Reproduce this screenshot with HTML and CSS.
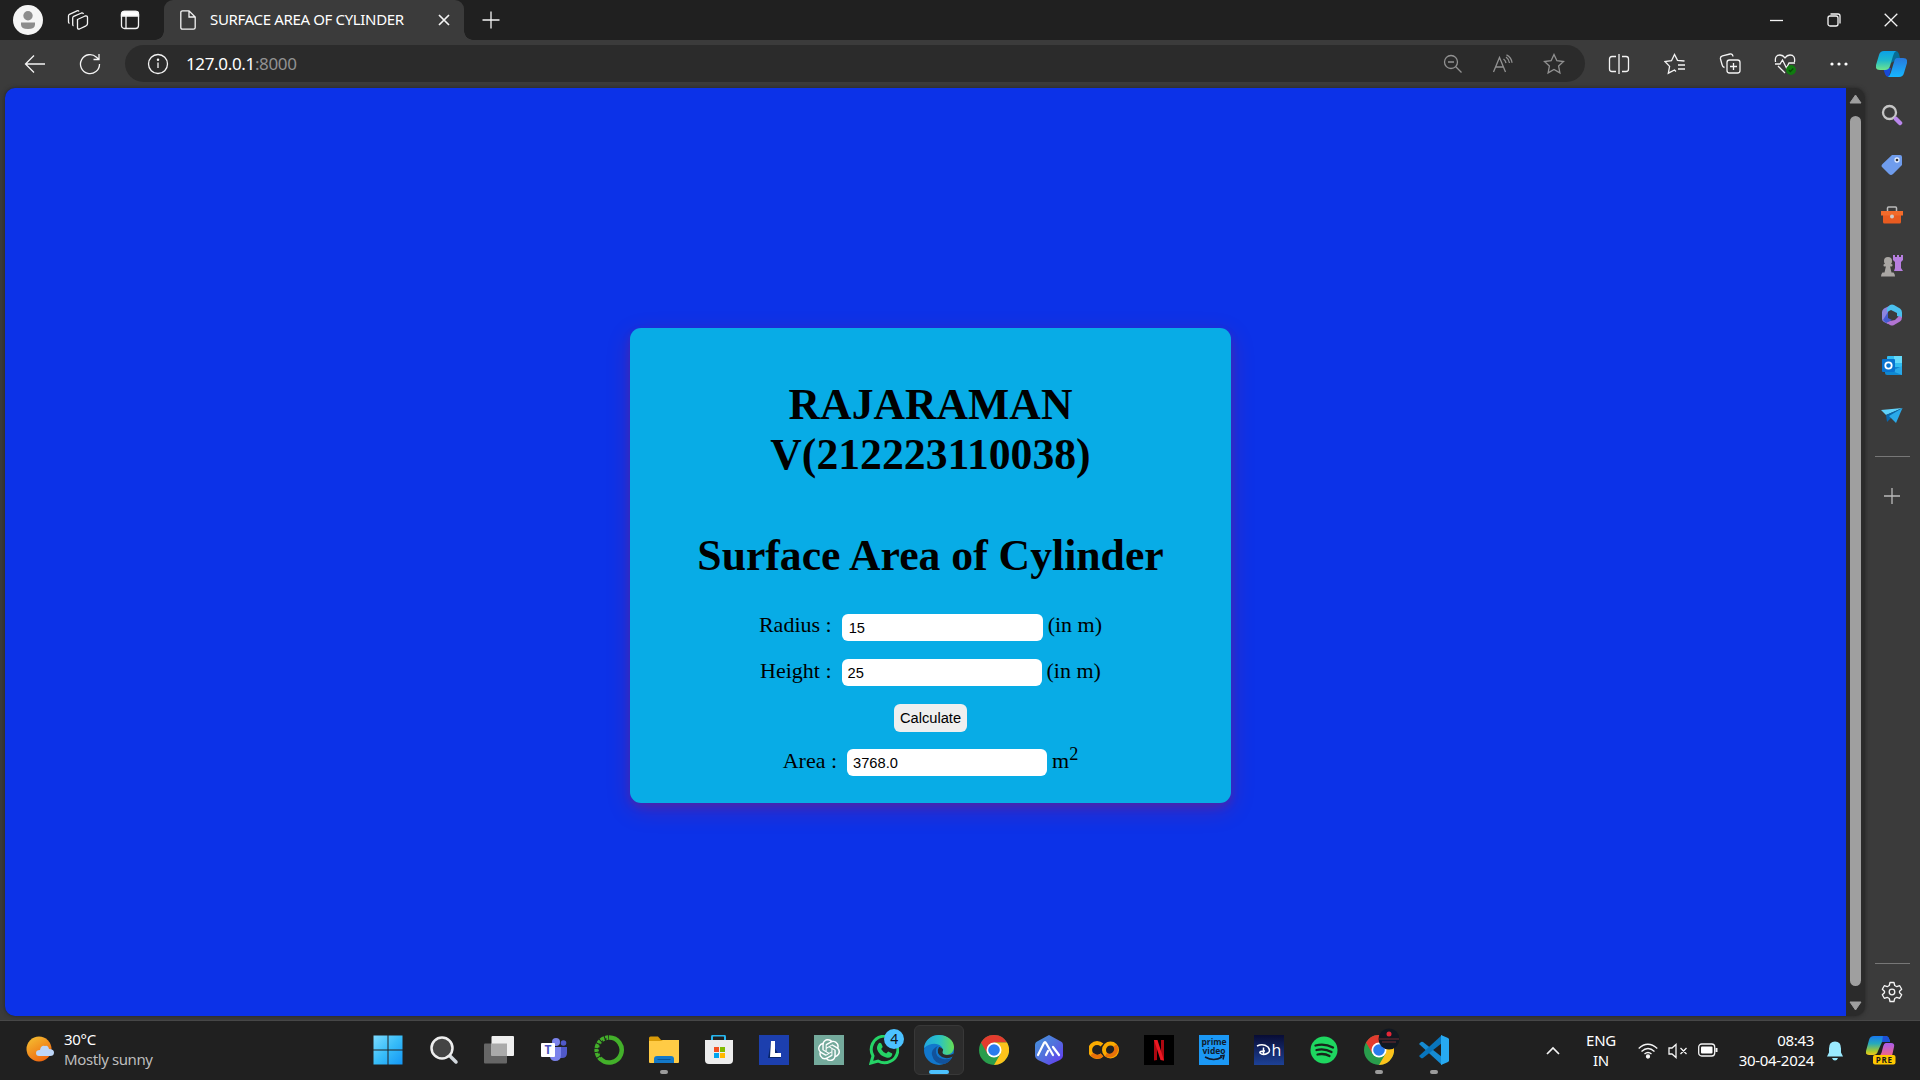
FILE: index.html
```html
<!DOCTYPE html>
<html lang="en">
<head>
<meta charset="utf-8">
<title>SURFACE AREA OF CYLINDER</title>
<link rel="stylesheet" href="styles.css">
</head>
<body>
<div class="desktop">
<header class="titlebar">
  <div class="cell"><svg width="30" height="30" viewBox="0 0 30 30"><circle cx="15" cy="15" r="15" fill="#f5f5f5"/><circle cx="15" cy="10.800" r="4.700" fill="#8c8c8c"/><path d="M8 17.500h14v2q0 4.500-7 4.500t-7-4.500z" fill="#8c8c8c"/></svg></div>
  <div class="cell"><svg class="line" width="22" height="22" viewBox="0 0 22 22"><path d="M10.500 10.500l7.500-3.500q2.500-.5 2.500 1.500v6q0 1.500-1.500 2.300l-6.500 3.200q-2 .5-2-1.500z"/><path d="M6.500 17q-.8-.3-.8-1.500V9q0-1 1-1.700L14.500 4q1.500-.4 2 1"/><path d="M2.500 14.500q-1-.4-1-1.500V7q0-1 1-1.700L10 1.800q1.500-.4 2 .8"/></svg></div>
  <div class="cell"><svg class="line" width="20" height="20" viewBox="0 0 20 20"><rect x="1.500" y="1.500" width="17" height="17" rx="3"/><path d="M1.500 6V4q0-2.500 2.500-2.500h12q2.500 0 2.500 2.500v2z" fill="#fff"/><path d="M6 6v12.500"/></svg></div>
  <div class="tab">
    <svg class="line" width="16" height="20" viewBox="0 0 16 20"><path d="M2.500.8H9l6.200 6.200v10.500q0 1.700-1.700 1.700h-11Q.8 19.200.8 17.500v-15Q.8.8 2.500.8zM9 .8V7h6"/></svg>
    <span class="tab-title">SURFACE AREA OF CYLINDER</span>
    <svg class="line strong" width="12" height="12" viewBox="0 0 12 12"><path d="M1 1l10 10M11 1L1 11"/></svg>
  </div>
  <div class="cell"><svg class="line" width="18" height="18" viewBox="0 0 18 18"><path d="M9 .5v17M.5 9h17"/></svg></div>
  <div></div>
  <div class="cell"><svg class="line" width="13" height="13" viewBox="0 0 13 13"><path d="M0 6.500h13"/></svg></div>
  <div class="cell"><svg class="line" width="14" height="14" viewBox="0 0 14 14"><rect x="1" y="3" width="10" height="10" rx="2"/><path d="M3.500 1H11q2 0 2 2v7.500"/></svg></div>
  <div class="cell"><svg class="line" width="14" height="14" viewBox="0 0 14 14"><path d="M.7.7l12.600 12.600M13.300.7L.7 13.300"/></svg></div>
</header>
<nav class="toolbar">
  <div class="cell"><svg class="line" width="22" height="20" viewBox="0 0 22 20"><path d="M21 10H1.500M10 1.500L1.500 10l8.500 8.500"/></svg></div>
  <div class="cell"><svg class="line" width="22" height="22" viewBox="0 0 22 22"><path d="M20.500 11A9.500 9.500 0 1 1 17.500 4.200L20 6.500M20 1v5.500h-5.500"/></svg></div>
  <div class="address">
    <svg class="line" width="22" height="22" viewBox="0 0 22 22"><circle cx="11" cy="11" r="9.500"/><path d="M11 9.500V15"/><circle cx="11" cy="6.800" r=".6"/></svg>
    <span class="url">127.0.0.1<span class="port">:8000</span></span>
    <div class="address-tools">
      <svg class="line dim" width="20" height="20" viewBox="0 0 20 20"><circle cx="8" cy="8" r="6.500"/><path d="M5 8h6M12.800 12.800l5.700 5.700"/></svg>
      <svg class="line dim" width="22" height="20" viewBox="0 0 22 20"><path d="M1.500 18L7.500 3.500 13.500 18M3.700 13h7.600M11.500 5q2 1.500 2.500 4M14 3q2.800 2 3.500 6M14.500.8q5 2.500 5.500 8"/></svg>
      <svg class="line dim" width="22" height="22" viewBox="0 0 22 22"><path d="M11 1.500l2.900 6.200 6.600.8-4.900 4.600 1.300 6.800-5.900-3.400-5.900 3.400 1.300-6.800-4.900-4.600 6.600-.8z"/></svg>
    </div>
  </div>
  <div></div>
  <div class="cell"><svg class="line" width="22" height="22" viewBox="0 0 22 22"><path d="M11 1v20M8 3.500H4Q1.500 3.500 1.500 6v10q0 2.500 2.500 2.500h4M14 3.500h4q2.500 0 2.500 2.500v10q0 2.500-2.500 2.500h-4"/></svg></div>
  <div class="cell"><svg class="line" width="22" height="22" viewBox="0 0 22 22"><path d="M12 18.500l-1.500-1.500-6.200 3.200 1.300-6.800L1 8.500l6.500-.8L10.500 1.500l3 5.800 7 .7M14 12h7M14 16h7"/></svg></div>
  <div class="cell"><svg class="line" width="22" height="22" viewBox="0 0 22 22"><rect x="8" y="7" width="13" height="13" rx="2.500"/><path d="M14.500 10v7M11 13.500h7M5.500 14.500q-2-.5-2.500-3L1.500 6Q1 3.500 3.500 2.800L11 1q2.500-.4 3 2.500"/></svg></div>
  <div class="cell"><svg class="line" width="22" height="22" viewBox="0 0 22 22"><path d="M1.500 9Q.5 2 6 2q3 0 5 2.800Q13 2 16 2q5.500 0 4.500 7M1 11h5l2.500-4 4 8 2.500-5h6M4 13l7 7"/><circle cx="17" cy="17" r="4.300" fill="#107c10" stroke="#107c10"/><path d="M14.800 17l1.500 1.500 3-3" stroke="#064b06"/></svg></div>
  <div class="cell"><svg width="18" height="4" viewBox="0 0 18 4" fill="#fff"><circle cx="2" cy="2" r="1.600"/><circle cx="9" cy="2" r="1.600"/><circle cx="16" cy="2" r="1.600"/></svg></div>
  <div class="cell"><svg width="31" height="28" viewBox="0 0 31 28"><defs><linearGradient id="cp1" x2="0" y2="1"><stop stop-color="#0aa0e8"/><stop offset=".5" stop-color="#20b9cb"/><stop offset="1" stop-color="#6fe58c"/></linearGradient><linearGradient id="cp2" x2="0" y2="1"><stop stop-color="#2878dc"/><stop offset="1" stop-color="#16b7ff"/></linearGradient></defs><path d="M15 1h5q2 0 3 3l1 4-9 5z" fill="#066d96"/><path d="M7 18h8l-2 9q-3 0-4-3z" fill="#1749d9"/><path d="M8 1h12q-2 1-3 5l-3 10q-1 4-5 4H4q-5 0-4-5L3 5q1-4 5-4z" fill="url(#cp1)"/><path d="M21 8h6q5 0 4 5l-3 10q-1 4-5 4H12q2-1 3-5l3-10q1-4 3-4z" fill="url(#cp2)"/></svg></div>
</nav>
<div class="workspace">
  <div class="viewport">
    <main class="page">
      <section class="card">
        <h1 class="heading">RAJARAMAN<br>V(212223110038)</h1>
        <h1 class="heading">Surface Area of Cylinder</h1>
        <form class="form">
          <div class="row"><label>Radius :</label><input class="wide" value="15"><span>(in m)</span></div>
          <div class="row height"><label>Height :</label><input value="25"><span>(in m)</span></div>
          <div class="row"><button type="button">Calculate</button></div>
          <div class="row area"><label>Area :</label><input value="3768.0"><span>m<sup>2</sup></span></div>
        </form>
      </section>
    </main>
    <div class="scrollbar">
      <svg width="13" height="10" viewBox="0 0 13 10"><path d="M6.500 1L12 9H1z" fill="#9f9f9f" stroke="#9f9f9f" stroke-linejoin="round"/></svg>
      <div class="thumb"></div>
      <svg width="13" height="10" viewBox="0 0 13 10"><path d="M6.500 9L12 1H1z" fill="#9f9f9f" stroke="#9f9f9f" stroke-linejoin="round"/></svg>
    </div>
  </div>
  <aside class="sidebar">
    <div class="side-cell"><svg width="22" height="22" viewBox="0 0 22 22" fill="none"><circle cx="8.500" cy="8.500" r="6.500" stroke="#c5c5c5" stroke-width="2.300"/><path d="M15 15l4 4" stroke="#b986ec" stroke-width="4.500" stroke-linecap="round"/></svg></div>
    <div class="side-cell"><svg width="22" height="22" viewBox="0 0 22 22"><path d="M11 1h8q2 0 2 2v8L12 20q-2 2-4 0L1.500 13.500q-2-1.500 0-3.500z" fill="#6f9cec"/><circle cx="16" cy="6" r="2" fill="#333" stroke="#dfeaff" stroke-width="1.300"/></svg></div>
    <div class="side-cell"><svg width="22" height="20" viewBox="0 0 22 20"><path d="M6.500 6V3q0-1 1-1h7q1 0 1 1v3" fill="none" stroke="#bbb" stroke-width="1.500"/><path d="M2 9h18v8q0 1.500-1.500 1.500h-15Q2 18.500 2 17z" fill="#e85b20"/><path d="M0 6h22v4.500H0z" fill="#f26b2b"/><circle cx="11" cy="11.500" r="2" fill="#ccc"/></svg></div>
    <div class="side-cell"><svg width="22" height="24" viewBox="0 0 22 24"><path d="M12 1h2v2h2V1h2v2h2V1h2v5l-2 2v6l2 3h-9l1-3V8l-2-2z" fill="#b77fe0"/><g fill="#a9a6a3"><circle cx="7" cy="7" r="4"/><rect x="2.500" y="10" width="9" height="2.500" rx="1"/><path d="M5 12h4l1.500 6.500h2q1.500 1.500 1.500 4H0q0-2.500 1.500-4h2z"/></g></svg></div>
    <div class="side-cell"><svg width="22" height="23" viewBox="0 0 22 23"><path d="M10 1L3 4.500Q1 6 1 8v7q0 2 2 3l4 2V8z" fill="#8d85df"/><path d="M9 1q2-1 4 0l6 3.500q2 1.500 2 4V14l-5-2V9L10 6 6 8V4z" fill="#4ac0ee"/><path d="M21 13q0 3-2 4.500L13 21q-2 1-4 0l-5-3 10-2 4-4z" fill="#b174d2"/><path d="M7 8v6l4 2-6 3-3-3z" fill="#465bd1"/></svg></div>
    <div class="side-cell"><svg width="21" height="20" viewBox="0 0 21 20"><rect x="5" y="0" width="15" height="15" rx="1" fill="#31bdf1"/><path d="M12 0h8v7h-8z" fill="#64dafa"/><path d="M3 11h17v8H5q-2 0-2-2z" fill="#0f88d1"/><path d="M20 10v9L10 15z" fill="#29a9e9"/><rect y="3" width="13" height="13" rx="1" fill="#0873cf"/><circle cx="6.500" cy="9.500" r="3.200" fill="none" stroke="#fff" stroke-width="1.800"/></svg></div>
    <div class="side-cell"><svg width="22" height="18" viewBox="0 0 22 18"><path d="M21.500 1L0 3l5 5z" fill="#5fd2fb"/><path d="M21.500 1L5 8l1 7 4-4z" fill="#0767ad"/><path d="M21.500 1L8 9l7 7z" fill="#2aa9e9"/></svg></div>
    <hr class="side-rule">
    <div class="side-cell side-add"><svg class="line grey" width="16" height="16" viewBox="0 0 16 16"><path d="M8 0v16M0 8h16"/></svg></div>
    <div class="side-space"></div>
    <hr class="side-rule">
    <div class="side-cell side-gear"><svg class="line" width="22" height="22" viewBox="0 0 22 22"><path d="M9 1.500h4l.7 3 2.100 1.200 2.900-1 2 3.500-2.200 2v1.600l2.200 2-2 3.500-2.900-1-2.100 1.200-.7 3H9l-.7-3-2.100-1.200-2.900 1-2-3.500 2.200-2v-1.600l-2.200-2 2-3.500 2.900 1 2.100-1.200z" stroke-linejoin="round"/><circle cx="11" cy="11" r="2.800"/></svg></div>
  </aside>
</div>
<footer class="taskbar">
  <div class="weather">
    <svg width="30" height="28" viewBox="0 0 30 28"><defs><linearGradient id="sun" x2=".6" y2="1"><stop stop-color="#f5c433"/><stop offset="1" stop-color="#ef6810"/></linearGradient></defs><circle cx="13" cy="14" r="12.500" fill="url(#sun)"/><path d="M13 21q-3 0-3-3t4-3q1-5 5-4 3-1 4 3 5 0 5 3.500t-4 3.500z" fill="#bdd5f8"/></svg>
    <div class="weather-text"><span>30°C</span><span class="muted">Mostly sunny</span></div>
  </div>
  <div class="apps">
    <div class="app"><svg width="30" height="30" viewBox="0 0 30 30"><defs><linearGradient id="win" gradientUnits="userSpaceOnUse" x1="0" y1="0" x2="30" y2="30"><stop stop-color="#7fdcff"/><stop offset=".5" stop-color="#38bdf8"/><stop offset="1" stop-color="#1295f5"/></linearGradient></defs><path d="M.5.500h14v14H.5zM15.500.500h14v14h-14zM.5 15.500h14v14H.5zM15.500 15.500h14v14h-14z" fill="url(#win)"/></svg></div>
    <div class="app"><svg width="30" height="30" viewBox="0 0 30 30" fill="none"><path d="M20 20l7 7" stroke="#d2d8dd" stroke-width="3.500" stroke-linecap="round"/><circle cx="13" cy="13" r="10.500" fill="#444" stroke="#eee" stroke-width="2.500"/></svg></div>
    <div class="app"><svg width="30" height="30" viewBox="0 0 30 30"><rect x="0" y="8.500" width="23" height="20" rx="1" fill="#666"/><rect x="7.500" y="1" width="22.500" height="20" rx="1" fill="#efefef"/><path d="M7.500 8.500H23V21H7.500z" fill="#aaa"/></svg></div>
    <div class="app"><svg width="28" height="26" viewBox="0 0 28 26"><circle cx="16" cy="5" r="4" fill="#7b83eb"/><circle cx="23.500" cy="6" r="2.800" fill="#5059c9"/><path d="M20 10h7v6q0 5-5 5h-2z" fill="#5059c9"/><path d="M10 10h11v8q0 6-6 6-4 0-5-4z" fill="#7b83eb"/><rect x="1" y="6" width="14" height="14" rx="1" fill="#fff"/><text class="glyph teams" x="8" y="17.300">T</text></svg></div>
    <div class="app"><svg width="32" height="32" viewBox="0 0 32 32" fill="none" stroke="#43b02a"><path d="M16 3.500a12.500 12.500 0 1 1-8.500 21.500" stroke-width="4.500"/><path d="M8 25.500A12.500 12.500 0 0 1 16 3.500" stroke-width="4.500" stroke-dasharray="3 .8 4 1"/><path d="M8 23A11.500 11.500 0 0 1 15 4.500" stroke="#202020" stroke-width="1.300" stroke-dasharray="2 2"/></svg></div>
    <div class="app running"><svg width="30" height="30" viewBox="0 0 30 30"><path d="M0 3q0-1.500 1.500-1.500H9l3 3.500h14v10H0z" fill="#d99b08"/><path d="M0 6h12l2-1h16v22q0 1-1 1H1q-1 0-1-1z" fill="#ffcb45"/><path d="M5 28v-4q0-3 3-3h14q3 0 3 3v4z" fill="#1479c8"/><path d="M8.500 24.500h13" stroke="#07559a"/></svg></div>
    <div class="app"><svg width="30" height="30" viewBox="0 0 30 30"><path d="M8 6V2q0-1.500 1.500-1.500h10Q21 .5 21 2v4" fill="none" stroke="#27b5ec" stroke-width="2"/><path d="M1 5h28v20q0 4-4 4H5q-4 0-4-4z" fill="#ededed"/><path d="M10 12h5v5h-5z" fill="#f25022"/><path d="M16 12h5v5h-5z" fill="#7fba00"/><path d="M10 18h5v5h-5z" fill="#00a4ef"/><path d="M16 18h5v5h-5z" fill="#ffb900"/></svg></div>
    <div class="app"><svg width="30" height="30" viewBox="0 0 30 30"><path fill="#1c3fae" d="M0 0h30v30H0z"/><path d="M12 7l-3 16h13" fill="#08266a"/><path d="M12 6h4v12h6v4H11z" fill="#fff"/></svg></div>
    <div class="app"><svg width="30" height="30" viewBox="0 0 30 30"><path fill="#74aa9c" d="M0 0h30v30H0z"/><path fill="#fff" transform="translate(4 4) scale(.92)" d="M22.2819 9.8211a5.9847 5.9847 0 0 0-.5157-4.9108 6.0462 6.0462 0 0 0-6.5098-2.9A6.0651 6.0651 0 0 0 4.9807 4.1818a5.9847 5.9847 0 0 0-3.9977 2.9 6.0462 6.0462 0 0 0 .7427 7.0966 5.98 5.98 0 0 0 .511 4.9107 6.051 6.051 0 0 0 6.5146 2.9001A5.9847 5.9847 0 0 0 13.2599 24a6.0557 6.0557 0 0 0 5.7718-4.2058 5.9894 5.9894 0 0 0 3.9977-2.9001 6.0557 6.0557 0 0 0-.7475-7.0729zm-9.022 12.6081a4.4755 4.4755 0 0 1-2.8764-1.0408l.1419-.0804 4.7783-2.7582a.7948.7948 0 0 0 .3927-.6813v-6.7369l2.02 1.1686a.071.071 0 0 1 .038.052v5.5826a4.504 4.504 0 0 1-4.4945 4.4944zm-9.6607-4.1254a4.4708 4.4708 0 0 1-.5346-3.0137l.142.0852 4.783 2.7582a.7712.7712 0 0 0 .7806 0l5.8428-3.3685v2.3324a.0804.0804 0 0 1-.0332.0615L9.74 19.9502a4.4992 4.4992 0 0 1-6.1408-1.6464zM2.3408 7.8956a4.485 4.485 0 0 1 2.3655-1.9728V11.6a.7664.7664 0 0 0 .3879.6765l5.8144 3.3543-2.0201 1.1685a.0757.0757 0 0 1-.071 0l-4.8303-2.7865A4.504 4.504 0 0 1 2.3408 7.872zm16.5963 3.8558L13.1038 8.364 15.1192 7.2a.0757.0757 0 0 1 .071 0l4.8303 2.7913a4.4944 4.4944 0 0 1-.6765 8.1042v-5.6772a.79.79 0 0 0-.407-.667zm2.0107-3.0231l-.142-.0852-4.7735-2.7818a.7759.7759 0 0 0-.7854 0L9.409 9.2297V6.8974a.0662.0662 0 0 1 .0284-.0615l4.8303-2.7866a4.4992 4.4992 0 0 1 6.6802 4.66zM8.3065 12.863l-2.02-1.1638a.0804.0804 0 0 1-.038-.0567V6.0742a4.4992 4.4992 0 0 1 7.3757-3.4537l-.142.0805L8.704 5.459a.7948.7948 0 0 0-.3927.6813zm1.0976-2.3654l2.602-1.4998 2.6069 1.4998v2.9994l-2.5974 1.4997-2.6067-1.4997Z"/></svg></div>
    <div class="app"><svg width="30" height="30" viewBox="0 0 30 30"><path d="M2 28l2-7A13.300 13.300 0 1 1 9 26z" fill="none" stroke="#25d366" stroke-width="3"/><path d="M10 8q2-1 3 2l.7 2-1.500 2q1.500 3 5 4.500l2-2 4 2q.5 1-1 3-2 2-5 1-7-2-9-8-1-3 1.800-6.500z" fill="#25d366"/></svg><span class="badge">4</span></div>
    <div class="app active"><svg width="30" height="30" viewBox="0 0 30 30"><defs><linearGradient id="ed1"><stop stop-color="#23a6df"/><stop offset=".5" stop-color="#28c2c7"/><stop offset="1" stop-color="#67df52"/></linearGradient></defs><circle cx="15" cy="15" r="15" fill="#1277cc"/><path d="M0 13C1 4 8 0 15 0c9 0 15 6 15 12 0 5-4 8-8 8-5 0-6-2-4-4 3-5-8-12-18-3z" fill="url(#ed1)"/><path d="M12 12q-5 3-4 8 2 9 12 9 5-1 8-6-5 2-9 1-8-2-7-9 0-2 2-4z" fill="#12529b"/><path d="M15 12q-3.500 6 3 10 5 2.500 11-.5l1-3q-3 1.500-7 1.500-6-.5-4-4.500 1-2-4-3.500z" fill="#2c2c2c"/></svg></div>
    <div class="app"><svg width="30" height="30" viewBox="0 0 30 30"><g id="chrome"><circle cx="15" cy="15" r="15" fill="#299d4c"/><path d="M2 7.500A15 15 0 0 1 28 7.500H15L8.500 18.800z" fill="#e33b2e"/><path d="M28 7.500A15 15 0 0 1 15 30l6.500-11.200L15 7.500z" fill="#fcc21b"/><circle cx="15" cy="15" r="7.500" fill="#fff"/><circle cx="15" cy="15" r="5.800" fill="#297bed"/></g></svg></div>
    <div class="app"><svg width="30" height="30" viewBox="0 0 30 30"><defs><linearGradient id="hex" x2="1" y2="1"><stop stop-color="#4496dd"/><stop offset=".5" stop-color="#5270dc"/><stop offset="1" stop-color="#6534f5"/></linearGradient></defs><path d="M15 0l11 6q3 1 3 4v11q0 2-3 4l-11 5-11-5q-3-2-3-4V10q0-3 3-4z" fill="url(#hex)"/><path d="M4 20l6-12q1-2 2 0l7 12M12 20l2-4M19 12l6 8" fill="none" stroke="#fff" stroke-width="2.200" stroke-linecap="round"/></svg></div>
    <div class="app"><svg width="30" height="20" viewBox="0 0 30 20" fill="none" stroke-width="4"><path d="M13 5a7 7 0 1 0 0 10" stroke="#f9ab00"/><path d="M3 14a7 7 0 0 0 10 1" stroke="#e8710a"/><circle cx="21.500" cy="10" r="6.500" stroke="#f9ab00"/><path d="M17 14.500a6.500 6.500 0 0 0 9-9" stroke="#e8710a"/></svg></div>
    <div class="app"><svg width="30" height="30" viewBox="0 0 30 30"><path d="M0 0h30v30H0z"/><path d="M10 5h3v20l-3 .5zM17 5h3v20.500l-3-.5z" fill="#ac0710"/><path d="M10 5h3.500L20 25.500 16.500 25z" fill="#ed1822"/></svg></div>
    <div class="app"><svg width="30" height="30" viewBox="0 0 30 30"><path fill="#1b98f5" d="M0 0h30v30H0z"/><text class="glyph prime" x="15" y="10">prime</text><text class="glyph prime" x="15" y="19">video</text><path d="M6 22q9 5 17 0M21 21l4-.5-1 4" fill="none" stroke="#111b2c" stroke-width="1.500"/></svg></div>
    <div class="app"><svg width="30" height="30" viewBox="0 0 30 30"><defs><linearGradient id="dh" x2="0" y2="1"><stop stop-color="#080c35"/><stop offset="1" stop-color="#1d4196"/></linearGradient></defs><path fill="url(#dh)" d="M0 0h30v30H0z"/><path d="M3 11q6-3 11 1 3 4 0 6-5 3-8 0-1-2 5-2M9.500 12.500v7" fill="none" stroke="#fff" stroke-width="1.500"/><text class="glyph hot" x="22.500" y="20.500">h</text></svg></div>
    <div class="app"><svg width="28" height="28" viewBox="0 0 28 28"><circle cx="14" cy="14" r="13.500" fill="#1ed760"/><path d="M5.500 9.500q9-2.500 17.500 2M6.500 14q8-2 15 2M7.500 18.500q7-1.500 12 1.500" fill="none" stroke="#17251b" stroke-width="2.300" stroke-linecap="round"/></svg></div>
    <div class="app running"><svg width="30" height="30" viewBox="0 0 30 30"><use href="#chrome"/></svg><svg class="profile" width="22" height="22" viewBox="0 0 22 22"><circle cx="11" cy="11" r="10.500" fill="#111821"/><circle cx="11" cy="6" r="2.500" fill="#e52637"/><path d="M1 11h20M4 14h14" stroke="#722d35"/></svg></div>
    <div class="app running"><svg width="30" height="30" viewBox="0 0 30 30"><path d="M0 9l2-2q1-.6 2 0l19 15v8z" fill="#168bd2"/><path d="M0 21l2 2q1 .6 2 0L23 8V0z" fill="#0875bd"/><path d="M22 0l7 3 1 1v22l-1 1-7 3z" fill="#27a9f1"/></svg></div>
  </div>
  <div class="tray">
    <svg class="line strong" width="14" height="9" viewBox="0 0 14 9"><path d="M1 8l6-6 6 6"/></svg>
    <div class="language"><span>ENG</span><span>IN</span></div>
    <div class="status">
      <svg class="line" width="20" height="16" viewBox="0 0 20 16"><path d="M.7 5.500q9-8.500 18.600 0M3.500 8.500q6.500-6 13 0M6.500 11q3.500-3 7 0"/><circle cx="10" cy="13.500" r="1.500" fill="#fff"/></svg>
      <svg class="line" width="20" height="16" viewBox="0 0 20 16"><path d="M1 5h3l4-3.500v13L4 11H1zM12.500 5l6 6M18.500 5l-6 6"/></svg>
      <svg class="line" width="20" height="14" viewBox="0 0 20 14"><rect x=".7" y="1" width="16" height="12" rx="3"/><rect x="3" y="3.500" width="11.500" height="7" rx="1" fill="#fff" stroke="none"/><path d="M18.500 5v4" stroke-width="2"/></svg>
    </div>
    <div class="clock"><span>08:43</span><span>30-04-2024</span></div>
    <svg width="18" height="20" viewBox="0 0 18 20" fill="#9aeaff"><path d="M9 .5q6 0 6 7v4l2 4H1l2-4v-4q0-7 6-7zM6 17h6q-1 2.500-3 2.500T6 17z"/></svg>
    <svg class="copilot" width="30" height="29" viewBox="0 0 30 29"><defs><linearGradient id="pr1" x2="0" y2="1"><stop stop-color="#1878f0"/><stop offset=".4" stop-color="#25aabb"/><stop offset=".8" stop-color="#a9c92c"/><stop offset="1" stop-color="#f3c71c"/></linearGradient><linearGradient id="pr2" x2="0" y2="1"><stop stop-color="#a95ded"/><stop offset="1" stop-color="#f56583"/></linearGradient></defs><path d="M8 0h12q3 0 4 6h-8l-4 9q-1 4-5 4H3q-4 0-3-4L3 4q1-4 5-4z" fill="url(#pr1)"/><path d="M17 0h3q3 0 4 6h-8z" fill="#1d50d7"/><path d="M20 7h5q4 0 3 4l-2 9H12q3 0 4-5l1-4q1-4 3-4z" fill="url(#pr2)"/><rect x="7" y="19" width="22.500" height="9.500" rx="2" fill="#ffc800"/><text class="glyph pre" x="18.300" y="26.500">PRE</text></svg>
  </div>
</footer>
</div>
</body>
</html>
```
FILE: styles.css
```css
* { box-sizing: border-box; }
body { margin: 0; background: #202020; color: #fff; font-family: "Noto Sans", "Open Sans", sans-serif; overflow: hidden; }
svg { display: block; flex: none; }
.desktop { width: 1920px; height: 1080px; display: grid; grid-template-rows: 40px 48px 933px 59px; }
.line { fill: none; stroke: #f4f4f4; stroke-width: 1.3; }
.line.strong { stroke-width: 1.7; }
.line.dim { stroke: #929292; }
.line.grey { stroke: #bbb; }
.cell { display: flex; align-items: center; justify-content: center; }

.titlebar { display: grid; grid-template-columns: 56px 43px 61px 308px 45px 1fr 58px 57px 58px; background: #202020; }
.tab { position: relative; display: flex; align-items: center; margin: 0 4px; padding: 0 14px 0 16px; background: #3b3b3b; border-radius: 9px 9px 0 0; }
.tab::before, .tab::after { content: ""; position: absolute; bottom: 0; width: 9px; height: 9px; }
.tab::before { left: -9px; background: radial-gradient(circle at 0 0, transparent 8.5px, #3b3b3b 9px); }
.tab::after { right: -9px; background: radial-gradient(circle at 100% 0, transparent 8.5px, #3b3b3b 9px); }
.tab-title { width: 221px; margin: -2px auto 0 14px; font-size: 15px; letter-spacing: -0.35px; white-space: nowrap; }

.toolbar { display: grid; grid-template-columns: 70px 40px 1475px 6px 56px 56px 54px 55px 54px 54px; background: #3b3b3b; }
.address { display: flex; align-items: center; height: 37px; margin: 5px 0 0 15px; padding: 0 20px 0 22px; background: #2b2b2b; border-radius: 19px; }
.toolbar > .cell { padding-bottom: 1px; }
.toolbar > .cell:last-child { padding-right: 3px; }
.url { margin: -1px auto 0 17px; font-size: 17px; letter-spacing: -0.35px; }
.port { color: #929292; }
.address-tools { display: flex; gap: 29px; align-items: center; }

.workspace { display: grid; grid-template-columns: 1865px 55px; background: #3b3b3b; border-bottom: 1px solid #484848; }
.viewport { display: grid; grid-template-columns: 1841px 19px; height: 928px; margin-left: 5px; border-radius: 10px; overflow: hidden; background: #2b2b2b; box-shadow: 0 0 4px #252525; }
.page { background: #0c32e8; color: #000; padding: 240px 0 0 625px; font: 22px "Liberation Serif", serif; }
.card { width: 601px; height: 475px; padding-top: 51px; background: #08ace6; border-radius: 11px; box-shadow: 0 4px 9px rgba(255, 0, 0, 0.15), 0 7px 25px rgba(255, 0, 0, 0.19); }
.heading { margin: 0 0 51px; font-size: 43.7px; line-height: 50px; text-align: center; }
.form { margin-top: -26px; }
.row { display: flex; height: 45px; align-items: center; justify-content: center; }
.row label { margin-right: 10px; margin-top: -5px; }
.row span { margin: -5px 0 0 5px; }
.row.height label, .row.height span { margin-top: -3px; }
.row.area label, .row.area span { margin-top: -3px; }
.row input { width: 200px; height: 27px; padding: 1px 6px; border: 0; border-radius: 6px; background: #fff; color: #000; font: 14.67px "Liberation Sans", sans-serif; }
.row input.wide { width: 201px; padding-left: 7px; }
.row button { width: 73px; height: 28px; padding: 0; border: 0; border-radius: 6px; background: #efefef; color: #000; font: 14.67px "Liberation Sans", sans-serif; }
.row sup { font-size: 18.3px; line-height: 0; vertical-align: 8px; }

.scrollbar { display: flex; flex-direction: column; align-items: center; justify-content: space-between; padding: 6px 0 5px; }
.thumb { width: 11px; height: 870px; margin: -1px 0 2px; border-radius: 6px; background: #9f9f9f; }
.sidebar { display: flex; flex-direction: column; align-items: center; padding: 2px 1px 1px 0; }
.side-cell { display: flex; height: 50.2px; align-items: center; justify-content: center; }
.side-rule { width: 35px; height: 1px; margin: 15px 0 14px; border: 0; background: #777; }
.side-add { height: 50px; }
.side-space { flex: 1; }
.side-rule + .side-gear { height: 55px; margin-top: -14px; }

.taskbar { display: grid; grid-template-columns: 361px 1100px 459px; background: #202020; font-size: 15px; line-height: 20px; letter-spacing: -0.3px; }
.weather { display: flex; align-items: center; gap: 8px; padding: 0 0 3px 26px; }
.weather svg { margin-top: -1px; }
.weather-text, .language, .clock { display: flex; flex-direction: column; }
.muted { color: #bdbdbd; letter-spacing: -0.4px; }
.apps { display: grid; grid-template-columns: repeat(20, 55px); }
.app:first-child { padding-right: 1px; }
.app { position: relative; display: flex; align-items: center; justify-content: center; padding-bottom: 1px; }
.active { width: 50px; height: 50px; margin: 4px 0 0 3px; padding-bottom: 0; background: #2c2c2c; border: 1px solid #383838; border-radius: 6px; }
.running::after, .active::after { content: ""; position: absolute; bottom: 6px; left: 24px; width: 8px; height: 4px; border-radius: 2px; background: #9b9b9b; }
.active::after { bottom: 0; left: 14px; width: 20px; background: #4cc2ff; }
.badge { position: absolute; top: 8px; right: 7px; width: 20px; height: 20px; border-radius: 50%; background: #4cc2ff; color: #111; text-align: center; font-size: 14px; line-height: 20px; }
.profile { position: absolute; top: 7px; right: 6px; }
.glyph { font-family: "Open Sans", sans-serif; font-weight: 700; text-anchor: middle; letter-spacing: 0; }
.teams { font-size: 12px; fill: #4b53bc; }
.prime { font-size: 8.5px; fill: #111b2c; }
.hot { font-size: 16px; font-weight: 400; fill: #fff; }
.pre { font-size: 8px; fill: #171717; letter-spacing: 0.7px; }
.tray { display: grid; grid-template-columns: 14px 34px 82px 92px 18px 30px; align-items: center; padding-left: 85px; }
.tray > .language { align-items: center; width: 34px; margin-left: 24px; }
.tray > .status { display: flex; gap: 10px; margin-left: 44px; }
.tray > .clock { align-items: flex-end; width: 92px; margin-left: 46px; }
.tray > svg:nth-of-type(2) { margin-left: 58px; }
.tray > .copilot { margin-left: 80px; }
.language, .clock { padding-bottom: 2px; }
```
